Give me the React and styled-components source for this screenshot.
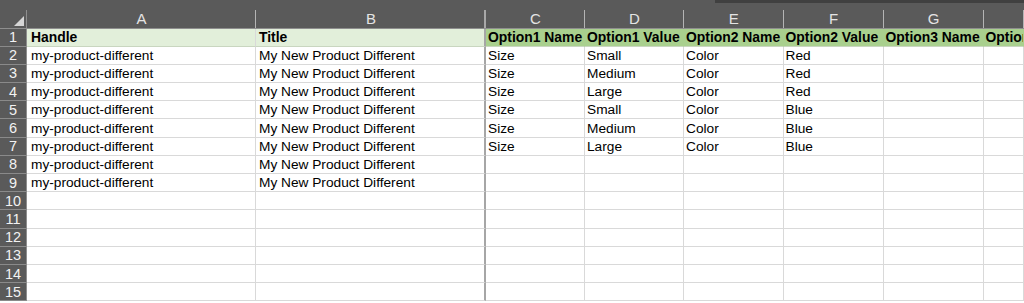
import React from 'react'
import styled, { createGlobalStyle } from 'styled-components';

const GlobalStyle = createGlobalStyle`
  html, body {
    margin: 0;
    padding: 0;
    background: #ffffff;
    overflow: hidden;
  }
  body {
    font-family: "Liberation Sans", Arial, sans-serif;
  }
`

const Window = styled.div`
  width: 1024px;
  height: 303px;
  overflow: hidden;
  background: #ffffff;
`

const TopStrip = styled.div`
  height: 10px;
  background: #5a5a5a;
  display: flex;
  justify-content: flex-end;
  align-items: flex-start;
`

const TopShade = styled.div`
  width: 309px;
  height: 3px;
  background: #404040;
`

const Sheet = styled.div`
  display: grid;
  grid-template-columns: 27px 229px 230px 99px 99px 99.5px 100px 100px 1fr;
  grid-template-rows: 18.5px repeat(15, 18.2px);
`

const ColHead = styled.div`
  background: #5a5a5a;
  color: #e4e4e4;
  font-size: 15px;
  display: flex;
  align-items: center;
  justify-content: center;
  border-bottom: 1px solid #8e8e8e;
  position: relative;
  box-sizing: border-box;
  white-space: nowrap;
  overflow: hidden;

  &::after {
    content: '';
    position: absolute;
    right: 0;
    top: 0;
    bottom: 0;
    width: ${props => props.$freeze ? 2 : 1}px;
    background: ${props => props.$freeze ? '#a8a8a8' : '#b4b4b4'};
  }
`

const Corner = styled.div`
  background: #5a5a5a;
  border-bottom: 1px solid #8e8e8e;
  border-right: 1px solid #8e8e8e;
  box-sizing: border-box;
  display: flex;
  align-items: flex-end;
  justify-content: flex-end;
  padding: 0 2px 2px 0;
`

const Triangle = styled.div`
  width: 0;
  height: 0;
  border-left: 10px solid transparent;
  border-bottom: 10px solid #d6d6d6;
`

const RowHead = styled.div`
  background: #5a5a5a;
  color: #f2f2f2;
  font-size: 14.5px;
  display: flex;
  align-items: center;
  justify-content: center;
  border-bottom: 1px solid #8a8a8a;
  border-right: 1px solid #8e8e8e;
  box-sizing: border-box;
`

const fills = {
  light: '#e2efda',
  dark: '#a9d08e',
  none: '#ffffff',
}

const Cell = styled.div`
  background: ${props => fills[props.$fill || 'none']};
  color: #000000;
  font-size: ${props => props.$bold ? 13.9 : 13.7}px;
  font-weight: ${props => props.$bold ? 700 : 400};
  padding-left: ${props => props.$pad}px;
  display: flex;
  align-items: center;
  white-space: nowrap;
  overflow: ${props => props.$clip ? 'hidden' : 'visible'};
  box-sizing: border-box;
  border-bottom: 1px solid ${props => props.$fill === 'none' || !props.$fill ? '#d9d9d9' : '#c9d6c0'};
  border-right: ${props => props.$freeze ? '2px solid #a6a6a6' : `1px solid ${props.$fill === 'dark' ? '#a9d08e' : '#d9d9d9'}`};
  position: relative;
`

const columns = ['A', 'B', 'C', 'D', 'E', 'F', 'G', '']

const headers = [
  'Handle', 'Title', 'Option1 Name', 'Option1 Value',
  'Option2 Name', 'Option2 Value', 'Option3 Name', 'Option3 Value',
]

const variants = [
  ['Small', 'Red'],
  ['Medium', 'Red'],
  ['Large', 'Red'],
  ['Small', 'Blue'],
  ['Medium', 'Blue'],
  ['Large', 'Blue'],
]

const buildRows = () => {
  const rows = [];
  for (let i = 0; i < 14; i++) {
    const v = variants[i];
    const product = i < 8;
    rows.push([
      product ? 'my-product-different' : '',
      product ? 'My New Product Different' : '',
      v ? 'Size' : '',
      v ? v[0] : '',
      v ? 'Color' : '',
      v ? v[1] : '',
      '',
      '',
    ]);
  }
  return rows;
}

const App = () => {
  const rows = buildRows();

  return (
    <Window>
      <GlobalStyle />
      <TopStrip>
        <TopShade />
      </TopStrip>
      <Sheet>
        <Corner><Triangle /></Corner>
        {columns.map((col, index) => (
          <ColHead key={index} $freeze={index === 1}>{col}</ColHead>
        ))}

        <RowHead>1</RowHead>
        {headers.map((text, index) => (
          <Cell
            key={index}
            $bold
            $fill={index < 2 ? 'light' : 'dark'}
            $pad={index === 0 ? 4 : index === 1 ? 3 : 2}
            $freeze={index === 1}
            $clip={index === 7}
          >
            {text}
          </Cell>
        ))}

        {rows.map((row, r) => (
          <React.Fragment key={r}>
            <RowHead>{r + 2}</RowHead>
            {row.map((text, c) => (
              <Cell key={c} $pad={c === 0 ? 4 : c === 1 ? 3 : 2} $freeze={c === 1} $clip={c === 7}>
                {text}
              </Cell>
            ))}
          </React.Fragment>
        ))}
      </Sheet>
    </Window>
  )
}

export default App
